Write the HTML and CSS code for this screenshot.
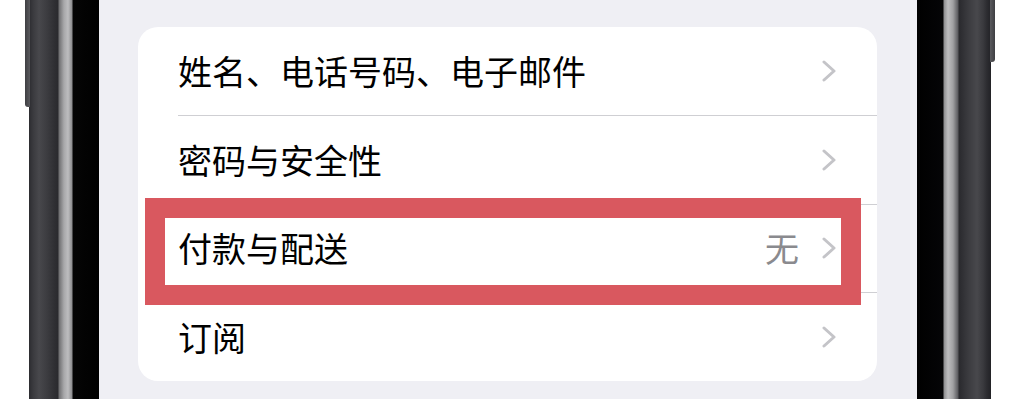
FILE: index.html
```html
<!DOCTYPE html>
<html lang="zh-CN">
<head>
<meta charset="utf-8">
<title>Apple ID</title>
<link rel="stylesheet" href="styles.css">
</head>
<body>
<div class="phone">
  <div class="bezel bezel-left">
    <div class="edge-white"></div>
    <div class="frame-left">
      <div class="side-button side-button-left"></div>
    </div>
  </div>
  <div class="screen">
    <div class="card">
      <div class="row">
        <span class="label">姓名、电话号码、电子邮件</span>
        <span class="trail"><svg class="chev" viewBox="0 0 14 22"><path d="M2 2 L12 11 L2 20"/></svg></span>
      </div>
      <div class="row">
        <span class="label">密码与安全性</span>
        <span class="trail"><svg class="chev" viewBox="0 0 14 22"><path d="M2 2 L12 11 L2 20"/></svg></span>
      </div>
      <div class="row">
        <span class="label">付款与配送</span>
        <span class="trail"><span class="value">无</span><svg class="chev" viewBox="0 0 14 22"><path d="M2 2 L12 11 L2 20"/></svg></span>
      </div>
      <div class="row row-last">
        <span class="label">订阅</span>
        <span class="trail"><svg class="chev" viewBox="0 0 14 22"><path d="M2 2 L12 11 L2 20"/></svg></span>
      </div>
      <div class="highlight"></div>
    </div>
  </div>
  <div class="bezel bezel-right">
    <div class="frame-right">
      <div class="side-button side-button-right"></div>
    </div>
    <div class="edge-white"></div>
  </div>
</div>
</body>
</html>
```
FILE: styles.css
```css
html, body {
  margin: 0;
  padding: 0;
  width: 1014px;
  height: 399px;
  overflow: hidden;
  background: #ffffff;
}

.phone {
  display: flex;
  width: 1014px;
  height: 399px;
}

.bezel {
  display: flex;
  height: 100%;
}

.bezel-left {
  width: 99px;
}

.bezel-right {
  width: 97px;
}

.edge-white {
  flex: 1;
  background: #ffffff;
}

.frame-left {
  position: relative;
  width: 70px;
  background: linear-gradient(to right,
    #2c2c30 0px, #3a3a3e 4px, #48484c 10px, #3c3c40 18px, #2e2e32 26px, #2a2a2e 29px,
    #6e6e70 30px, #a8a8aa 35px, #bdbdbf 39px, #8e8e90 43px,
    #050505 44px, #000000 70px);
}

.frame-right {
  position: relative;
  width: 74px;
  background: linear-gradient(to right,
    #000000 0px, #050507 26px,
    #8e8e90 27px, #bdbdbf 31px, #a0a0a2 36px, #5a5a5e 41px,
    #2a2a2e 42px, #3c3c40 52px, #48484c 60px, #3a3a3e 66px, #2c2c30 70px, #222226 74px);
}

.side-button {
  position: absolute;
  top: 0;
  width: 5px;
  background: linear-gradient(to right, #3e3e42, #5a5a5e);
}

.side-button-left {
  left: -4px;
  height: 107px;
  border-radius: 0 0 0 3px;
}

.side-button-right {
  right: -4px;
  height: 62px;
  border-radius: 0 0 3px 0;
  background: linear-gradient(to right, #5a5a5e, #3e3e42);
}

.screen {
  flex: 1;
  background: #efeff4;
  padding: 27px 40px 0 39px;
}

.card {
  position: relative;
  background: #ffffff;
  border-radius: 20px;
  padding-left: 40px;
  height: 354px;
  display: flex;
  flex-direction: column;
}

.row {
  flex: 1;
  display: flex;
  align-items: center;
  justify-content: space-between;
  padding-right: 41px;
  border-bottom: 1px solid #cfcfd3;
  font-family: "Noto Sans CJK SC", "Noto Sans", sans-serif;
  font-size: 34px;
  color: #000000;
}

.row-last {
  border-bottom: none;
}

.label {
  line-height: 1;
}

.trail {
  display: flex;
  align-items: center;
  gap: 23px;
}

.value {
  color: #8a8a8e;
  line-height: 1;
}

.chev {
  width: 14px;
  height: 22px;
  display: block;
}

.chev path {
  fill: none;
  stroke: #c4c4c8;
  stroke-width: 3;
  stroke-linecap: round;
  stroke-linejoin: round;
}

.highlight {
  position: absolute;
  left: 7px;
  top: 171px;
  width: 716px;
  height: 107px;
  box-sizing: border-box;
  border: 20px solid #d9585f;
}
```
